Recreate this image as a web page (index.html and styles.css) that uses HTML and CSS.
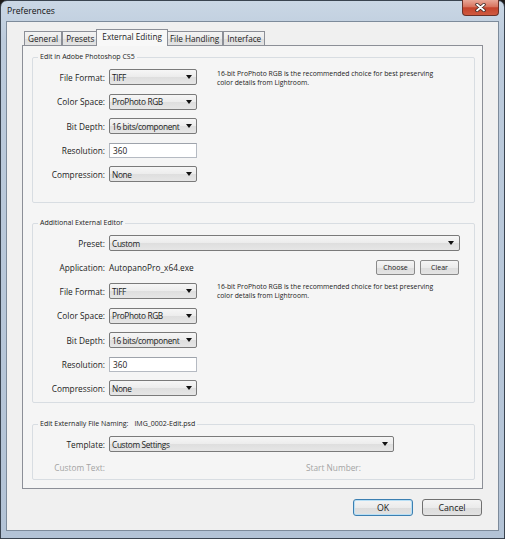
FILE: index.html
```html
<!DOCTYPE html>
<html lang="en">
<head>
    <meta charset="UTF-8">
    <meta name="viewport" content="width=device-width, initial-scale=1.0">
    <title>Preferences</title>
    <link rel="stylesheet" href="styles.css">
</head>
<body>
    <div class="window">
        <div class="titlebar">
            <span class="title">Preferences</span>
            <button class="close-btn" title="Close">
                <svg width="11" height="9" viewBox="0 0 11 9">
                    <path d="M2 1.5 L9 7.5 M9 1.5 L2 7.5" stroke="#3a2420" stroke-width="3.4" stroke-linecap="round"/>
                    <path d="M2 1.5 L9 7.5 M9 1.5 L2 7.5" stroke="#ffffff" stroke-width="1.8" stroke-linecap="round"/>
                </svg>
            </button>
        </div>

        <div class="client">
            <ul class="tabs">
                <li>General</li>
                <li>Presets</li>
                <li class="active">External Editing</li>
                <li>File Handling</li>
                <li>Interface</li>
            </ul>

            <div class="panel">
                <!-- Photoshop -->
                <fieldset class="group group-ps">
                    <legend>Edit in Adobe Photoshop CS5</legend>
                    <div class="group-body">
                        <div class="fields">
                            <div class="row"><label>File Format:</label><div class="select">TIFF</div></div>
                            <div class="row"><label>Color Space:</label><div class="select">ProPhoto RGB</div></div>
                            <div class="row"><label>Bit Depth:</label><div class="select">16 bits/component</div></div>
                            <div class="row row-input"><label>Resolution:</label><div class="textbox">360</div></div>
                            <div class="row"><label>Compression:</label><div class="select">None</div></div>
                        </div>
                        <p class="note">16-bit ProPhoto RGB is the recommended choice for best preserving<br>color details from Lightroom.</p>
                    </div>
                </fieldset>

                <!-- second editor -->
                <fieldset class="group group-extra">
                    <legend>Additional External Editor</legend>
                    <div class="row"><label>Preset:</label><div class="select select-wide">Custom</div></div>
                    <div class="row row-app">
                        <label>Application:</label>
                        <span class="app-name">AutopanoPro_x64.exe</span>
                        <button class="small-btn">Choose</button>
                        <button class="small-btn">Clear</button>
                    </div>
                    <div class="group-body">
                        <div class="fields">
                            <div class="row"><label>File Format:</label><div class="select">TIFF</div></div>
                            <div class="row"><label>Color Space:</label><div class="select">ProPhoto RGB</div></div>
                            <div class="row"><label>Bit Depth:</label><div class="select">16 bits/component</div></div>
                            <div class="row row-input"><label>Resolution:</label><div class="textbox">360</div></div>
                            <div class="row"><label>Compression:</label><div class="select">None</div></div>
                        </div>
                        <p class="note">16-bit ProPhoto RGB is the recommended choice for best preserving<br>color details from Lightroom.</p>
                    </div>
                </fieldset>

                <!-- naming -->
                <fieldset class="group group-naming">
                    <legend>Edit Externally File Naming:<span class="sample-name">IMG_0002-Edit.psd</span></legend>
                    <div class="row"><label>Template:</label><div class="select select-template">Custom Settings</div></div>
                    <div class="row row-disabled">
                        <label>Custom Text:</label>
                        <span class="start-number">Start Number:</span>
                    </div>
                </fieldset>
            </div>

            <div class="actions">
                <button class="btn btn-default">OK</button>
                <button class="btn">Cancel</button>
            </div>
        </div>
    </div>
</body>
</html>
```

FILE: styles.css
```css
* {
    box-sizing: border-box;
}
body {
    margin: 0;
    width: 505px;
    height: 539px;
    background-color: #1e1b1a;
    font-family: "Open Sans", "Noto Sans", sans-serif;
    font-size: 8.3px;
    color: #1b1b1b;
}
.window {
    width: 505px;
    height: 539px;
    padding: 0 5px 7px;
    border: 1px solid #3a4450;
    border-radius: 7px 7px 0 0;
    background: linear-gradient(to bottom, #cad7e5 0, #bccbdc 40px, #b3c3d6 100%);
    display: flex;
    flex-direction: column;
}
.titlebar {
    height: 20px;
    display: flex;
    justify-content: space-between;
    align-items: flex-start;
}
.title {
    padding: 4px 0 0 1px;
    font-size: 8.6px;
    color: #111;
}
.close-btn {
    width: 37px;
    height: 16px;
    margin: -1px 0 0;
    padding: 0;
    border: 1px solid #6b3128;
    border-top: none;
    border-radius: 0 0 4px 4px;
    background: linear-gradient(to bottom, #e9a898 0, #d8745f 45%, #c4432c 52%, #cf5a40 100%);
    display: flex;
    align-items: center;
    justify-content: center;
}
.client {
    flex: 1;
    background-color: #f0f0f0;
    border: 1px solid #7d8b9b;
    padding: 7px 15px 0;
    display: flex;
    flex-direction: column;
}

/* tabs */
.tabs {
    list-style: none;
    margin: 0 0 0 2px;
    padding: 0;
    height: 16px;
    display: flex;
    align-items: flex-end;
}
.tabs li {
    height: 14px;
    padding: 0 3px;
    border: 1px solid #8c8f97;
    border-bottom: none;
    background: linear-gradient(to bottom, #f3f3f3 0, #ebebeb 50%, #dcdcdc 51%, #e4e4e4 100%);
    font-size: 8.2px;
    line-height: 13px;
    color: #222;
}
.tabs li.active {
    position: relative;
    z-index: 1;
    height: 17px;
    margin: 0 -2px -1px;
    padding: 0 5px;
    background: #f8f8f8;
    line-height: 14px;
}
.panel {
    height: 444px;
    border: 1px solid #8c8f97;
    background-color: #f5f5f5;
    padding: 6px 7px 0 9px;
}

/* group boxes */
.group {
    margin: 0;
    padding: 7px 0 0;
    border: 1px solid #d8dde2;
    border-radius: 2px;
    min-width: 0;
}
.group legend {
    margin-left: 5px;
    padding: 0 2px;
    font-size: 7px;
    line-height: 10px;
    color: #222;
}
.group-ps {
    padding-bottom: 20px;
}
.group-extra {
    margin-top: 15px;
    padding-bottom: 6px;
}
.group-naming {
    margin-top: 16px;
    padding-bottom: 6px;
}
.sample-name {
    margin-left: 6px;
}
.group-body {
    display: flex;
    align-items: flex-start;
}
.fields {
    display: flex;
    flex-direction: column;
    gap: 8.5px;
}
.row {
    display: flex;
    align-items: center;
    height: 16px;
}
.row label {
    width: 72px;
    margin-right: 4px;
    text-align: right;
    white-space: nowrap;
}
.row-input {
    height: 15px;
}
.note {
    margin: 1px 0 0 20px;
    font-size: 6.8px;
    line-height: 8.5px;
    color: #222;
}
.group-extra .group-body {
    margin-top: 8px;
}
.group-extra .note {
    margin-top: 0;
}

/* dropdowns and fields */
.select {
    width: 88px;
    height: 16px;
    padding: 0 4px 0 2px;
    border: 1px solid #7a7a7a;
    border-radius: 2px;
    background: linear-gradient(to bottom, #f6f6f6 0, #ececec 50%, #dedede 51%, #e6e6e6 100%);
    display: flex;
    align-items: center;
    justify-content: space-between;
    white-space: nowrap;
    letter-spacing: -0.35px;
}
.select::after {
    content: "";
    flex-shrink: 0;
    margin-left: 2px;
    border-left: 3px solid transparent;
    border-right: 3px solid transparent;
    border-top: 4px solid #111;
}
.select-wide {
    width: 351px;
    padding-right: 5px;
}
.select-template {
    width: 285px;
    padding-right: 5px;
}
.textbox {
    width: 88px;
    height: 15px;
    padding: 0 3px;
    border: 1px solid #b5bac2;
    border-top-color: #9ea3ab;
    background-color: #fff;
    line-height: 13px;
}
.row-app {
    margin-top: 9px;
    height: 15px;
}
.app-name {
    flex: 1;
}
.small-btn {
    width: 39px;
    height: 15px;
    margin-left: 5px;
    padding: 0;
    border: 1px solid #8a8a8a;
    border-radius: 2px;
    background: linear-gradient(to bottom, #f5f5f5 0, #ebebeb 50%, #dddddd 51%, #e4e4e4 100%);
    font-family: inherit;
    font-size: 7px;
    color: #222;
}
.row-app .small-btn:last-child {
    margin-right: 15px;
}
.row-disabled {
    margin-top: 9px;
    height: 12px;
    color: #a3a3a3;
}
.start-number {
    margin-left: 197px;
}

/* dialog buttons */
.actions {
    display: flex;
    justify-content: flex-end;
    gap: 9px;
    margin: 10px 1px 0 0;
}
.btn {
    width: 60px;
    height: 17px;
    padding: 0;
    border: 1px solid #707070;
    border-radius: 3px;
    background: linear-gradient(to bottom, #f4f4f4 0, #ebebeb 50%, #dcdcdc 51%, #e2e2e2 100%);
    font-family: inherit;
    font-size: 8.8px;
    color: #1b1b1b;
}
.btn-default {
    border-color: #3c7fb1;
    box-shadow: inset 0 0 0 1px #b8dff5;
}
```
